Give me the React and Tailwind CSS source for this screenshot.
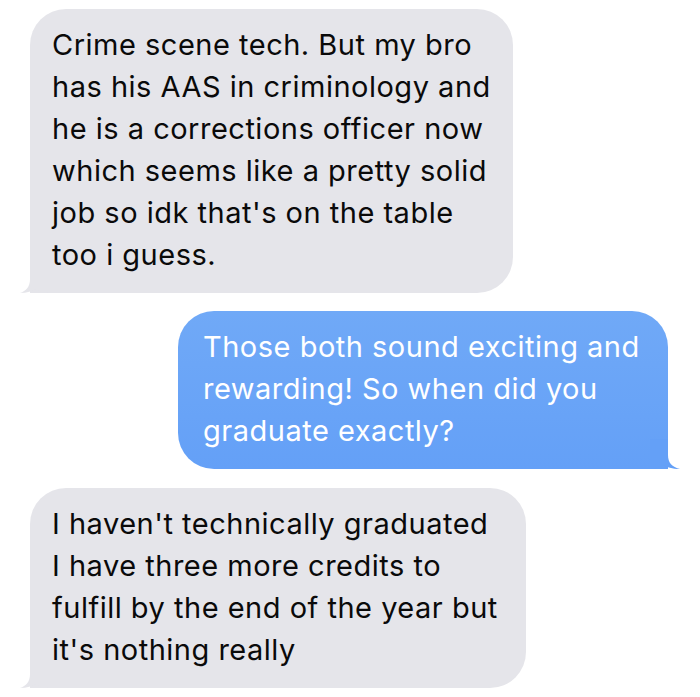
import React from 'react';

const GrayTail = () => (
  <svg className="absolute left-[-10px] bottom-0" width="30" height="30" viewBox="0 0 30 30">
    <path d="M10 0 L10 16 C10 24 6 28 0 30 C7 30 12 28 16 26 C20 28 24 30 30 30 L30 0 Z" fill="#e5e5ea" />
  </svg>
);

const BlueTail = () => (
  <svg className="absolute right-[-12px] bottom-0" width="30" height="30" viewBox="0 0 30 30">
    <path d="M18 0 L18 16 C18 24 22 28 30 30 C22 30 17 28 13 26 C9 28 5 30 0 30 L0 0 Z" fill="#64a0f7" />
  </svg>
);

const Bubble = ({ lines, sent, className }) => (
  <div
    className={
      'relative rounded-[36px] pt-[15px] pb-[17px] text-[29px] leading-[42px] tracking-[0.5px] ' +
      (sent
        ? 'rounded-br-none bg-gradient-to-b from-[#70a9f7] to-[#64a0f7] text-white pl-[25px] '
        : 'rounded-bl-none bg-[#e5e5ea] text-[#0a0a0a] pl-[22px] ') +
      className
    }
  >
    {lines.map((l, i) => (
      <div key={i} className="whitespace-nowrap relative z-10">{l}</div>
    ))}
    {sent ? <BlueTail /> : <GrayTail />}
  </div>
);

export default function App() {
  return (
    <div
      className="w-[700px] h-[697px] bg-white flex flex-col pt-[9px] overflow-hidden"
      style={{ fontFamily: 'Inter, "Liberation Sans", sans-serif' }}
    >
      <Bubble
        className="ml-[30px] w-[483px]"
        lines={[
          'Crime scene tech. But my bro',
          'has his AAS in criminology and',
          'he is a corrections officer now',
          'which seems like a pretty solid',
          "job so idk that's on the table",
          'too i guess.',
        ]}
      />
      <Bubble
        sent
        className="ml-[178px] mt-[18px] w-[490px]"
        lines={[
          'Those both sound exciting and',
          'rewarding! So when did you',
          'graduate exactly?',
        ]}
      />
      <Bubble
        className="ml-[30px] mt-[19px] w-[496px]"
        lines={[
          "I haven't technically graduated",
          'I have three more credits to',
          'fulfill by the end of the year but',
          "it's nothing really",
        ]}
      />
    </div>
  );
}
